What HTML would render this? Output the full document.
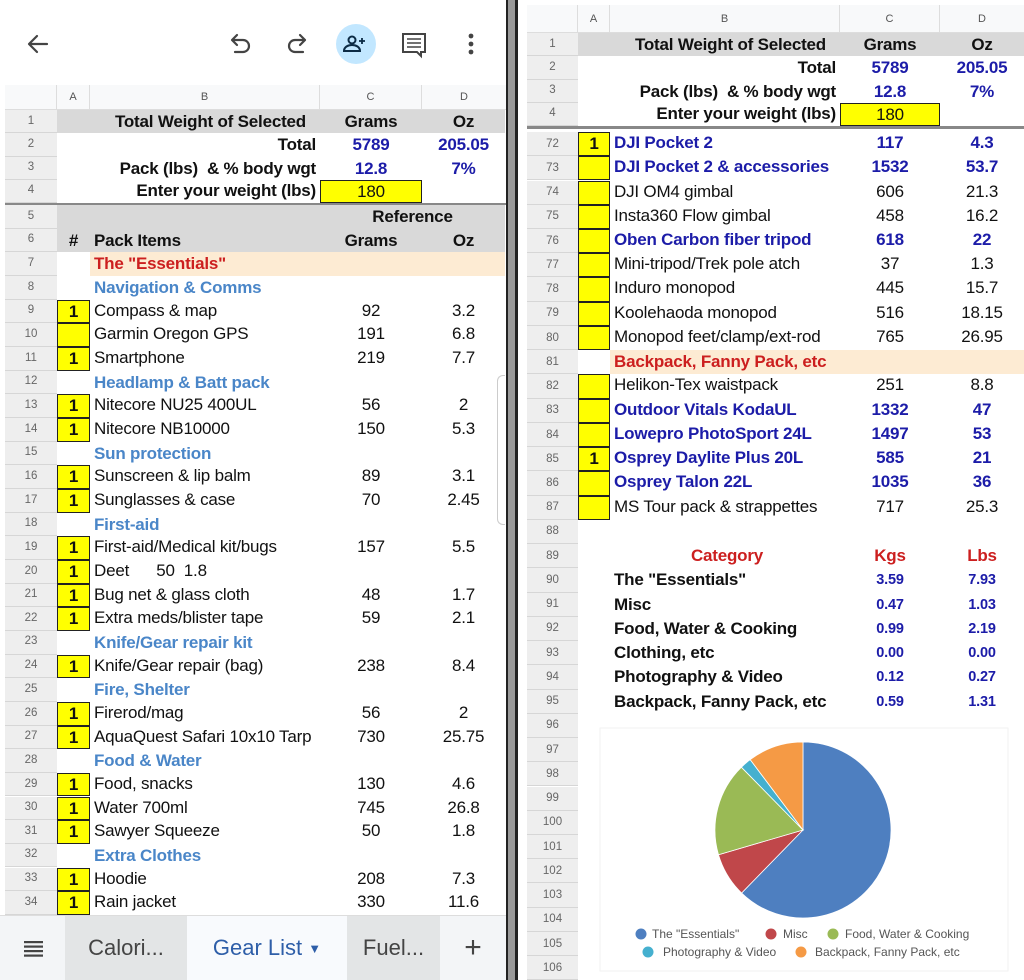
<!DOCTYPE html>
<html><head><meta charset="utf-8"><style>
*{box-sizing:border-box;margin:0;padding:0}
body{width:1024px;height:980px;overflow:hidden;background:#fff;font-family:"Liberation Sans",Arial,sans-serif;position:relative;color:#111}
.p{position:absolute;top:0;height:980px;overflow:hidden;background:#fff}
.r{position:absolute;left:0;width:506px}
.r>div{position:absolute;top:0;height:100%;white-space:nowrap;font-size:17px;letter-spacing:-0.2px}
.n{background:#eeeeee;border-bottom:1px solid #d6d6d6;color:#666;font-size:11.5px!important;letter-spacing:0!important;text-align:center;display:flex;align-items:center;justify-content:center}
.L .n{left:5px;width:52px}.L .a{left:57px;width:33px}.L .b{left:90px;width:230px}.L .c{left:320px;width:102px}.L .d{left:422px;width:83px}
.R .n{left:9px;width:51px}.R .a{left:60px;width:32px}.R .b{left:92px;width:230px}.R .c{left:322px;width:100px}.R .d{left:422px;width:84px}
.b{padding-left:4px}
.c,.d{text-align:center}
.a{text-align:center}
.y{background:#ffff00!important;border:1.5px solid #222;font-weight:bold}
.bb{font-weight:bold}
.sec{color:#4a86c8;font-weight:bold}
.blue{color:#1c1ca8;font-weight:bold}
.red{color:#cc1f1f;font-weight:bold}
.g{background:#d9d9d9}
.or{background:#fdebd3}
.rt{text-align:right;padding-right:4px;font-weight:bold}
.hdr{position:absolute;background:#f8f9fa;border-bottom:1px solid #ddd}
.hdr div{position:absolute;top:0;height:100%;border-right:1px solid #ddd;font-size:11px;color:#555;display:flex;align-items:center;justify-content:center}
.sm{font-size:14.5px!important}
</style></head><body>

<!-- LEFT PANEL -->
<div class="p L" style="left:0;width:506px">
  <div style="position:absolute;left:0;top:0;width:506px;height:85px;background:#fff"></div>
  <svg style="position:absolute;left:0;top:0" width="506" height="85">
    <g fill="none" stroke="#444" stroke-width="2.2" stroke-linecap="round" stroke-linejoin="round">
      <path d="M47 44H30M37 36l-8 8 8 8"/>
      <path d="M233 40h10a6 6 0 0 1 0 12h-8M237 35l-5 5 5 5"/>
      <path d="M305 40h-10a6 6 0 0 0 0 12h8M300 35l5 5-5 5"/>
    </g>
    <circle cx="356" cy="44" r="20" fill="#c2e7ff"/>
    <g fill="none" stroke="#0b2a44" stroke-width="2">
      <circle cx="352" cy="40" r="3.5"/>
      <path d="M344 51c0-4 4-6 8-6s8 2 8 6z"/>
      <path d="M362 38v6M359 41h6" stroke-width="1.8"/>
    </g>
    <g fill="none" stroke="#444" stroke-width="2">
      <path d="M403 34h22v18h-4v4l-4-4h-14z"/>
      <path d="M407 39h14M407 43h14M407 47h14" stroke-width="1.6"/>
    </g>
    <g fill="#444"><circle cx="471" cy="36" r="2.4"/><circle cx="471" cy="44" r="2.4"/><circle cx="471" cy="52" r="2.4"/></g>
  </svg>
  <div class="hdr" style="left:5px;top:85px;width:501px;height:25px">
    <div style="left:0;width:52px"></div><div style="left:52px;width:33px">A</div><div style="left:85px;width:230px">B</div><div style="left:315px;width:102px">C</div><div style="left:417px;width:84px;border-right:none">D</div>
  </div>

  <div class="r" style="top:110px;height:23.25px;line-height:23.25px"><div class="n">1</div><div class="a g"></div><div class="b g" style="text-align:right;padding-right:14px;font-weight:bold">Total Weight of Selected</div><div class="c g bb">Grams</div><div class="d g bb">Oz</div></div>
  <div class="r" style="top:133.25px;height:23.25px;line-height:23.25px"><div class="n">2</div><div class="a"></div><div class="b rt">Total</div><div class="c blue">5789</div><div class="d blue">205.05</div></div>
  <div class="r" style="top:156.5px;height:23.25px;line-height:23.25px"><div class="n">3</div><div class="a"></div><div class="b rt">Pack (lbs)&nbsp; &amp; % body wgt</div><div class="c blue">12.8</div><div class="d blue">7%</div></div>
  <div class="r" style="top:179.75px;height:23.25px;line-height:21px"><div class="n">4</div><div class="a"></div><div class="b rt">Enter your weight (lbs)</div><div class="c y" style="font-weight:normal">180</div><div class="d"></div></div>
  <div style="position:absolute;left:5px;top:202.5px;width:501px;height:2.5px;background:#888"></div>

  <div class="r" style="top:205px;height:23.66px;line-height:23.66px"><div class="n">5</div><div class="a g"></div><div class="b g"></div><div class="c g bb" style="width:185px;text-align:center">Reference</div></div>
  <div class="r" style="top:228.7px;height:23.66px;line-height:23.66px"><div class="n">6</div><div class="a g bb">#</div><div class="b g bb">Pack Items</div><div class="c g bb">Grams</div><div class="d g bb">Oz</div></div>
  <div class="r" style="top:252.3px;height:23.66px;line-height:23.66px"><div class="n">7</div><div class="b or red" style="width:415px">The "Essentials"</div></div>
  <div class="r" style="top:276px;height:23.66px;line-height:23.66px"><div class="n">8</div><div class="b sec">Navigation &amp; Comms</div></div>
  <div class="r" style="top:299.6px;height:23.66px;line-height:21px"><div class="n">9</div><div class="a y">1</div><div class="b">Compass &amp; map</div><div class="c">92</div><div class="d">3.2</div></div>
  <div class="r" style="top:323.3px;height:23.66px;line-height:21px"><div class="n">10</div><div class="a y"></div><div class="b">Garmin Oregon GPS</div><div class="c">191</div><div class="d">6.8</div></div>
  <div class="r" style="top:347px;height:23.66px;line-height:21px"><div class="n">11</div><div class="a y">1</div><div class="b">Smartphone</div><div class="c">219</div><div class="d">7.7</div></div>
  <div class="r" style="top:370.6px;height:23.66px;line-height:23.66px"><div class="n">12</div><div class="b sec">Headlamp &amp; Batt pack</div></div>
  <div class="r" style="top:394.3px;height:23.66px;line-height:21px"><div class="n">13</div><div class="a y">1</div><div class="b">Nitecore NU25 400UL</div><div class="c">56</div><div class="d">2</div></div>
  <div class="r" style="top:417.9px;height:23.66px;line-height:21px"><div class="n">14</div><div class="a y">1</div><div class="b">Nitecore NB10000</div><div class="c">150</div><div class="d">5.3</div></div>
  <div class="r" style="top:441.6px;height:23.66px;line-height:23.66px"><div class="n">15</div><div class="b sec">Sun protection</div></div>
  <div class="r" style="top:465.3px;height:23.66px;line-height:21px"><div class="n">16</div><div class="a y">1</div><div class="b">Sunscreen &amp; lip balm</div><div class="c">89</div><div class="d">3.1</div></div>
  <div class="r" style="top:488.9px;height:23.66px;line-height:21px"><div class="n">17</div><div class="a y">1</div><div class="b">Sunglasses &amp; case</div><div class="c">70</div><div class="d">2.45</div></div>
  <div class="r" style="top:512.6px;height:23.66px;line-height:23.66px"><div class="n">18</div><div class="b sec">First-aid</div></div>
  <div class="r" style="top:536.2px;height:23.66px;line-height:21px"><div class="n">19</div><div class="a y">1</div><div class="b">First-aid/Medical kit/bugs</div><div class="c">157</div><div class="d">5.5</div></div>
  <div class="r" style="top:559.9px;height:23.66px;line-height:21px"><div class="n">20</div><div class="a y">1</div><div class="b" style="white-space:pre">Deet      50  1.8</div></div>
  <div class="r" style="top:583.6px;height:23.66px;line-height:21px"><div class="n">21</div><div class="a y">1</div><div class="b">Bug net &amp; glass cloth</div><div class="c">48</div><div class="d">1.7</div></div>
  <div class="r" style="top:607.2px;height:23.66px;line-height:21px"><div class="n">22</div><div class="a y">1</div><div class="b">Extra meds/blister tape</div><div class="c">59</div><div class="d">2.1</div></div>
  <div class="r" style="top:630.9px;height:23.66px;line-height:23.66px"><div class="n">23</div><div class="b sec">Knife/Gear repair kit</div></div>
  <div class="r" style="top:654.5px;height:23.66px;line-height:21px"><div class="n">24</div><div class="a y">1</div><div class="b">Knife/Gear repair (bag)</div><div class="c">238</div><div class="d">8.4</div></div>
  <div class="r" style="top:678.2px;height:23.66px;line-height:23.66px"><div class="n">25</div><div class="b sec">Fire, Shelter</div></div>
  <div class="r" style="top:701.9px;height:23.66px;line-height:21px"><div class="n">26</div><div class="a y">1</div><div class="b">Firerod/mag</div><div class="c">56</div><div class="d">2</div></div>
  <div class="r" style="top:725.5px;height:23.66px;line-height:21px"><div class="n">27</div><div class="a y">1</div><div class="b">AquaQuest Safari 10x10 Tarp</div><div class="c">730</div><div class="d">25.75</div></div>
  <div class="r" style="top:749.2px;height:23.66px;line-height:23.66px"><div class="n">28</div><div class="b sec">Food &amp; Water</div></div>
  <div class="r" style="top:772.8px;height:23.66px;line-height:21px"><div class="n">29</div><div class="a y">1</div><div class="b">Food, snacks</div><div class="c">130</div><div class="d">4.6</div></div>
  <div class="r" style="top:796.5px;height:23.66px;line-height:21px"><div class="n">30</div><div class="a y">1</div><div class="b">Water 700ml</div><div class="c">745</div><div class="d">26.8</div></div>
  <div class="r" style="top:820.2px;height:23.66px;line-height:21px"><div class="n">31</div><div class="a y">1</div><div class="b">Sawyer Squeeze</div><div class="c">50</div><div class="d">1.8</div></div>
  <div class="r" style="top:843.8px;height:23.66px;line-height:23.66px"><div class="n">32</div><div class="b sec">Extra Clothes</div></div>
  <div class="r" style="top:867.5px;height:23.66px;line-height:21px"><div class="n">33</div><div class="a y">1</div><div class="b">Hoodie</div><div class="c">208</div><div class="d">7.3</div></div>
  <div class="r" style="top:891.1px;height:23.66px;line-height:21px"><div class="n">34</div><div class="a y">1</div><div class="b">Rain jacket</div><div class="c">330</div><div class="d">11.6</div></div>
  <div style="position:absolute;left:497px;top:375px;width:8px;height:150px;border:1px solid #ccc;border-right:none;border-radius:6px 0 0 6px"></div>

  <!-- tabs -->
  <div style="position:absolute;left:0;top:915px;width:506px;height:65px;background:#f3f5f7;border-top:1px solid #ddd"></div>
  <div style="position:absolute;left:65px;top:916px;width:122px;height:64px;background:#e3e5e6;font-size:22px;color:#444;line-height:64px;text-align:center">Calori...</div>
  <div style="position:absolute;left:187px;top:916px;width:160px;height:64px;background:#f8fafd;font-size:22px;color:#2e5ea8;line-height:64px;text-align:center">Gear List <span style="font-size:13px;vertical-align:2px">▼</span></div>
  <div style="position:absolute;left:347px;top:916px;width:93px;height:64px;background:#e3e5e6;font-size:22px;color:#444;line-height:64px;text-align:center">Fuel...</div>
  <div style="position:absolute;left:440px;top:916px;width:66px;height:64px;font-size:30px;color:#444;line-height:64px;text-align:center;font-weight:300">+</div>
  <svg style="position:absolute;left:24px;top:941px" width="20" height="16"><g fill="#444"><rect y="0" width="19" height="2.2"/><rect y="4.5" width="19" height="2.2"/><rect y="9" width="19" height="2.2"/><rect y="13.5" width="19" height="2.2"/></g></svg>
</div>

<!-- DIVIDER -->
<div style="position:absolute;left:506px;top:0;width:12px;height:980px;background:#999;border-left:2px solid #222;border-right:3px solid #222"></div>

<!-- RIGHT PANEL -->
<div class="p R" style="left:518px;width:506px">
  <div class="hdr" style="left:9px;top:5px;width:497px;height:28px">
    <div style="left:0;width:51px"></div><div style="left:51px;width:32px">A</div><div style="left:83px;width:230px">B</div><div style="left:313px;width:100px">C</div><div style="left:413px;width:84px;border-right:none">D</div>
  </div>
  <div class="r" style="top:33px;height:23.25px;line-height:23.25px"><div class="n">1</div><div class="a g"></div><div class="b g" style="text-align:right;padding-right:14px;font-weight:bold">Total Weight of Selected</div><div class="c g bb">Grams</div><div class="d g bb">Oz</div></div>
  <div class="r" style="top:56.25px;height:23.25px;line-height:23.25px"><div class="n">2</div><div class="a"></div><div class="b rt">Total</div><div class="c blue">5789</div><div class="d blue">205.05</div></div>
  <div class="r" style="top:79.5px;height:23.25px;line-height:23.25px"><div class="n">3</div><div class="a"></div><div class="b rt">Pack (lbs)&nbsp; &amp; % body wgt</div><div class="c blue">12.8</div><div class="d blue">7%</div></div>
  <div class="r" style="top:102.75px;height:23.25px;line-height:21px"><div class="n">4</div><div class="a"></div><div class="b rt">Enter your weight (lbs)</div><div class="c y" style="font-weight:normal">180</div><div class="d"></div></div>
  <div style="position:absolute;left:9px;top:126px;width:497px;height:3px;background:#888"></div>

  <div class="r" style="top:132px;height:24.24px;line-height:22px"><div class="n">72</div><div class="a y">1</div><div class="b blue">DJI Pocket 2</div><div class="c blue">117</div><div class="d blue">4.3</div></div>
  <div class="r" style="top:156.2px;height:24.24px;line-height:22px"><div class="n">73</div><div class="a y"></div><div class="b blue">DJI Pocket 2 &amp; accessories</div><div class="c blue">1532</div><div class="d blue">53.7</div></div>
  <div class="r" style="top:180.5px;height:24.24px;line-height:22px"><div class="n">74</div><div class="a y"></div><div class="b">DJI OM4 gimbal</div><div class="c">606</div><div class="d">21.3</div></div>
  <div class="r" style="top:204.7px;height:24.24px;line-height:22px"><div class="n">75</div><div class="a y"></div><div class="b">Insta360 Flow gimbal</div><div class="c">458</div><div class="d">16.2</div></div>
  <div class="r" style="top:229px;height:24.24px;line-height:22px"><div class="n">76</div><div class="a y"></div><div class="b blue">Oben Carbon fiber tripod</div><div class="c blue">618</div><div class="d blue">22</div></div>
  <div class="r" style="top:253.2px;height:24.24px;line-height:22px"><div class="n">77</div><div class="a y"></div><div class="b">Mini-tripod/Trek pole atch</div><div class="c">37</div><div class="d">1.3</div></div>
  <div class="r" style="top:277.4px;height:24.24px;line-height:22px"><div class="n">78</div><div class="a y"></div><div class="b">Induro monopod</div><div class="c">445</div><div class="d">15.7</div></div>
  <div class="r" style="top:301.7px;height:24.24px;line-height:22px"><div class="n">79</div><div class="a y"></div><div class="b">Koolehaoda monopod</div><div class="c">516</div><div class="d">18.15</div></div>
  <div class="r" style="top:325.9px;height:24.24px;line-height:22px"><div class="n">80</div><div class="a y"></div><div class="b">Monopod feet/clamp/ext-rod</div><div class="c">765</div><div class="d">26.95</div></div>
  <div class="r" style="top:350.2px;height:24.24px;line-height:24.24px"><div class="n">81</div><div class="b or red" style="width:414px">Backpack, Fanny Pack, etc</div></div>
  <div class="r" style="top:374.4px;height:24.24px;line-height:22px"><div class="n">82</div><div class="a y"></div><div class="b">Helikon-Tex waistpack</div><div class="c">251</div><div class="d">8.8</div></div>
  <div class="r" style="top:398.6px;height:24.24px;line-height:22px"><div class="n">83</div><div class="a y"></div><div class="b blue">Outdoor Vitals KodaUL</div><div class="c blue">1332</div><div class="d blue">47</div></div>
  <div class="r" style="top:422.9px;height:24.24px;line-height:22px"><div class="n">84</div><div class="a y"></div><div class="b blue">Lowepro PhotoSport 24L</div><div class="c blue">1497</div><div class="d blue">53</div></div>
  <div class="r" style="top:447.1px;height:24.24px;line-height:22px"><div class="n">85</div><div class="a y">1</div><div class="b blue">Osprey Daylite Plus 20L</div><div class="c blue">585</div><div class="d blue">21</div></div>
  <div class="r" style="top:471.4px;height:24.24px;line-height:22px"><div class="n">86</div><div class="a y"></div><div class="b blue">Osprey Talon 22L</div><div class="c blue">1035</div><div class="d blue">36</div></div>
  <div class="r" style="top:495.6px;height:24.24px;line-height:22px"><div class="n">87</div><div class="a y"></div><div class="b">MS Tour pack &amp; strappettes</div><div class="c">717</div><div class="d">25.3</div></div>
  <div class="r" style="top:519.8px;height:24.24px"><div class="n">88</div></div>
  <div class="r" style="top:544.1px;height:24.24px;line-height:24.24px"><div class="n">89</div><div class="b red" style="text-align:center">Category</div><div class="c red">Kgs</div><div class="d red">Lbs</div></div>
  <div class="r" style="top:568.3px;height:24.24px;line-height:24.24px"><div class="n">90</div><div class="b bb">The "Essentials"</div><div class="c blue sm">3.59</div><div class="d blue sm">7.93</div></div>
  <div class="r" style="top:592.6px;height:24.24px;line-height:24.24px"><div class="n">91</div><div class="b bb">Misc</div><div class="c blue sm">0.47</div><div class="d blue sm">1.03</div></div>
  <div class="r" style="top:616.8px;height:24.24px;line-height:24.24px"><div class="n">92</div><div class="b bb">Food, Water &amp; Cooking</div><div class="c blue sm">0.99</div><div class="d blue sm">2.19</div></div>
  <div class="r" style="top:641px;height:24.24px;line-height:24.24px"><div class="n">93</div><div class="b bb">Clothing, etc</div><div class="c blue sm">0.00</div><div class="d blue sm">0.00</div></div>
  <div class="r" style="top:665.3px;height:24.24px;line-height:24.24px"><div class="n">94</div><div class="b bb">Photography &amp; Video</div><div class="c blue sm">0.12</div><div class="d blue sm">0.27</div></div>
  <div class="r" style="top:689.5px;height:24.24px;line-height:24.24px"><div class="n">95</div><div class="b bb">Backpack, Fanny Pack, etc</div><div class="c blue sm">0.59</div><div class="d blue sm">1.31</div></div>
  <div class="r" style="top:713.8px;height:24.24px"><div class="n">96</div></div>
  <div class="r" style="top:738px;height:24.24px"><div class="n">97</div></div>
  <div class="r" style="top:762.2px;height:24.24px"><div class="n">98</div></div>
  <div class="r" style="top:786.5px;height:24.24px"><div class="n">99</div></div>
  <div class="r" style="top:810.7px;height:24.24px"><div class="n">100</div></div>
  <div class="r" style="top:835px;height:24.24px"><div class="n">101</div></div>
  <div class="r" style="top:859.2px;height:24.24px"><div class="n">102</div></div>
  <div class="r" style="top:883.4px;height:24.24px"><div class="n">103</div></div>
  <div class="r" style="top:907.7px;height:24.24px"><div class="n">104</div></div>
  <div class="r" style="top:931.9px;height:24.24px"><div class="n">105</div></div>
  <div class="r" style="top:956.2px;height:24.24px"><div class="n">106</div></div>

  <svg style="position:absolute;left:0;top:0" width="506" height="980">
    <rect x="82" y="728" width="408" height="243" fill="#fff" stroke="#f2f2f2"/>
    <g transform="translate(-518,0)" stroke="#fff" stroke-width="0.8">
      <path d="M803 830L803 742A88 88 0 1 1 741.6 893Z" fill="#4e7fc0"/>
      <path d="M803 830L741.6 893A88 88 0 0 1 718.5 854.7Z" fill="#c0474a"/>
      <path d="M803 830L718.5 854.7A88 88 0 0 1 741.4 767.2Z" fill="#9aba55"/>
      <path d="M803 830L741.4 767.2A88 88 0 0 1 750.2 759.6Z" fill="#45b0cf"/>
      <path d="M803 830L750.2 759.6A88 88 0 0 1 803 742Z" fill="#f59a45"/>
    </g>
    <g font-family="Liberation Sans,Arial,sans-serif" font-size="12" fill="#555">
      <circle cx="123" cy="934" r="5.5" fill="#4e7fc0"/><text x="134" y="938">The "Essentials"</text>
      <circle cx="253" cy="934" r="5.5" fill="#c0474a"/><text x="265" y="938">Misc</text>
      <circle cx="315" cy="934" r="5.5" fill="#9aba55"/><text x="327" y="938">Food, Water &amp; Cooking</text>
      <circle cx="130" cy="952" r="5.5" fill="#45b0cf"/><text x="145" y="956">Photography &amp; Video</text>
      <circle cx="283" cy="952" r="5.5" fill="#f59a45"/><text x="297" y="956">Backpack, Fanny Pack, etc</text>
    </g>
  </svg>
</div>
</body></html>
